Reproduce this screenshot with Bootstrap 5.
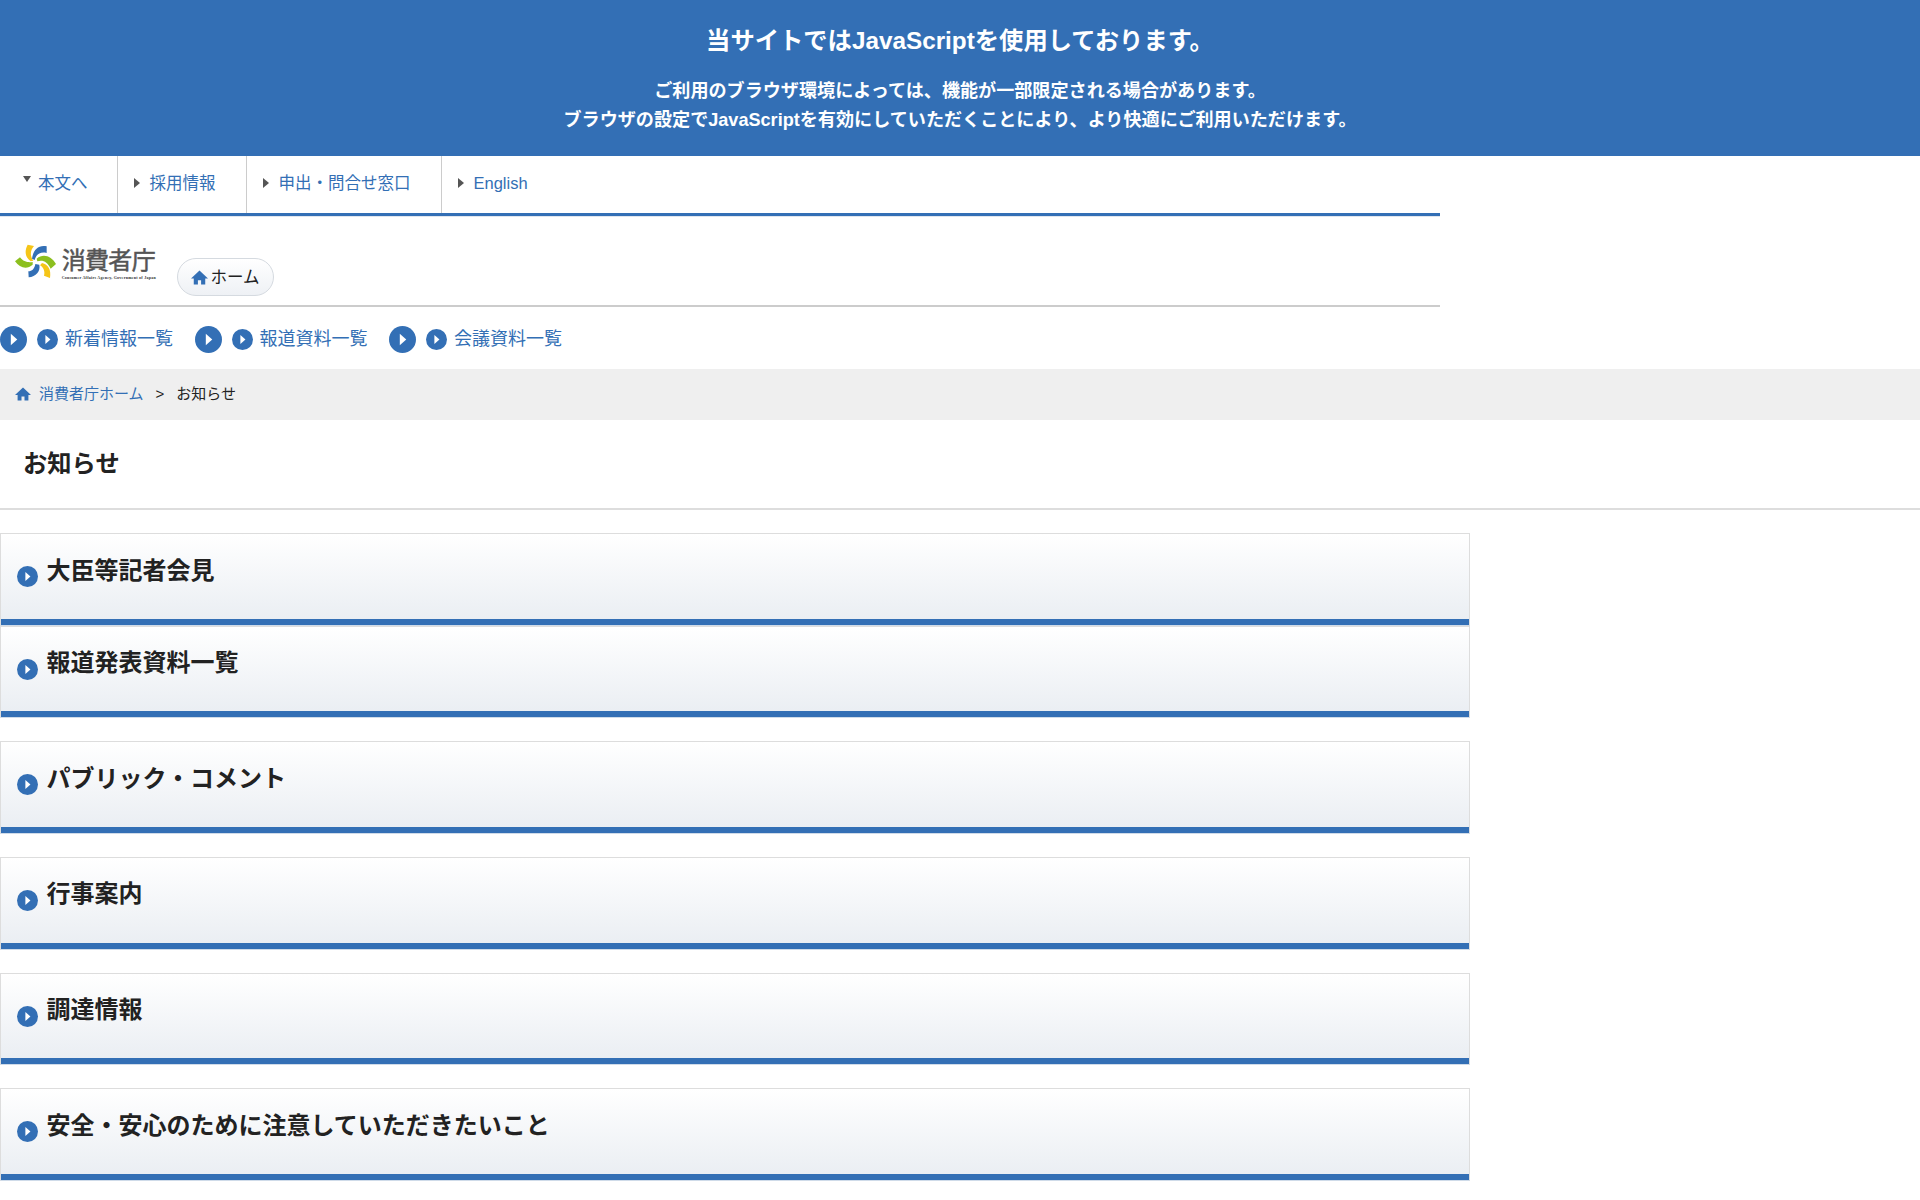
<!DOCTYPE html>
<html lang="ja"><head><meta charset="utf-8"><title>お知らせ</title>
<link href="https://cdn.jsdelivr.net/npm/bootstrap@5.3.0/dist/css/bootstrap.min.css" rel="stylesheet">
<style>
body{font-family:"Liberation Sans","Noto Sans CJK JP",sans-serif;color:#222;font-size:16px;height:1200px;overflow:hidden}
a{color:#336fb5;text-decoration:none}
.js-banner{background:#336fb5;color:#fff;height:156px;text-align:center;font-weight:700;padding-top:24px}
.js-banner .ttl{font-size:24.3px;line-height:34px;margin-bottom:19px}
.js-banner .txt{font-size:18.1px;line-height:29px;margin:0}
.util-nav{width:1440px;height:60px;border-bottom:3px solid #336fb5;box-shadow:0 1px 0 #e0e6ee}
.util-nav a{font-size:16.5px;display:flex;align-items:center;height:57px;border-right:1px solid #ccc;padding:0 30px 2px 16px;gap:10px}
.util-nav a.first-item{padding-left:23px;padding-right:29px;gap:7px}
.util-nav a.last-item{border-right:0}
.tri-r{width:0;height:0;border-left:6.5px solid #555;border-top:5px solid transparent;border-bottom:5px solid transparent;margin-top:-1px}
.tri-d{width:0;height:0;border-top:6px solid #555;border-left:4.5px solid transparent;border-right:4.5px solid transparent;margin-top:-10px}
.logo-row{width:1440px;height:91px;border-bottom:2px solid #ccc;padding-left:10px;align-items:flex-start}
.logo-svg{margin-top:22px;flex-shrink:0}
.home-pill{margin-top:42px;margin-left:17px;width:97px;height:38px;border:1px solid #d5dae0;border-radius:19px;background:linear-gradient(#fff,#eef1f5);color:#222;font-size:16.5px;gap:2px}
.quick-row{height:62px;padding-top:2px;gap:21.5px}
.quick-row a{font-size:18px}
.big-ic{margin-right:10px}
.small-ic{margin-right:7px}
.crumb-bar{background:#efefef;height:51px;padding-left:15px;font-size:15px;gap:8px}
.crumb-bar svg{margin-top:-2px}
.page-ttl{height:90px;border-bottom:2px solid #ddd;padding-left:23px;font-size:24.3px;font-weight:700;line-height:1;margin:0}
.sect-list{margin-top:23px}
.sect{width:1470px;height:92.67px;margin-bottom:23px;border:1px solid #ddd;border-bottom:1px solid #cfdbe9;background:linear-gradient(#fff,#e9edf2);position:relative}
.sect.tight{margin-bottom:0}
.sect h2{font-size:24px;font-weight:700;color:#222;margin:0;padding:19.5px 0 0 45.5px;line-height:34px}
.sect::after{content:"";position:absolute;left:0;right:0;bottom:0;height:6px;background:#336fb5}
.sect svg{position:absolute;left:15.5px;top:32px}
</style></head><body>
<svg width="0" height="0" class="position-absolute"><defs>
<symbol id="pl" viewBox="0 0 20 20"><circle cx="10" cy="10" r="10" fill="#336fb5"/><path d="M8 5.8L12.8 10L8 14.2z" fill="#fff"/></symbol>
<symbol id="hm" viewBox="0 0 16 16"><path d="M8 1.5L0 9h2.6v5.5h3.9v-4h3v4h3.9V9H16z" fill="#336fb5"/></symbol>
</defs></svg>
<div class="js-banner"><div class="ttl">当サイトではJavaScriptを使用しております。</div>
<p class="txt">ご利用のブラウザ環境によっては、機能が一部限定される場合があります。</p>
<p class="txt">ブラウザの設定でJavaScriptを有効にしていただくことにより、より快適にご利用いただけます。</p></div>
<nav class="util-nav d-flex">
<a href="#" class="first-item"><span class="tri-d"></span>本文へ</a>
<a href="#"><span class="tri-r"></span><span>採用情報</span></a>
<a href="#"><span class="tri-r"></span><span>申出・問合せ窓口</span></a>
<a href="#" class="last-item"><span class="tri-r"></span><span>English</span></a>
</nav>
<div class="logo-row d-flex">
<svg width="150" height="48" viewBox="0 0 450 144" class="logo-svg">
<path d="M53 20C45 35 42 55 62 70L70 68C58 52 62 35 72 24Z" fill="#f5c518"/>
<path d="M66 62C70 35 85 20 110 25L110 45C90 40 78 50 74 66Z" fill="#336fb5"/>
<path d="M80 62C100 45 125 55 138 78L122 92C112 72 100 65 82 70Z" fill="#8cbf1f"/>
<path d="M96 75C115 80 124 95 120 120L102 113C106 100 100 88 90 82Z" fill="#f5c518"/>
<path d="M88 80C92 100 78 116 56 118L55 100C66 100 74 92 76 78Z" fill="#336fb5"/>
<path d="M68 80C50 96 30 90 15 70L30 58C40 72 55 74 68 72Z" fill="#8cbf1f"/>
<text x="155" y="93" font-size="72" fill="#555" stroke="#555" stroke-width="1.5" textLength="282" font-family="Noto Sans CJK JP">消費者庁</text>
<text x="155" y="122" font-size="12" font-weight="700" fill="#333" textLength="282" font-family="Liberation Serif">Consumer Affairs Agency, Government of Japan</text>
</svg>
<a href="#" class="home-pill d-flex align-items-center justify-content-center"><svg width="17" height="17"><use href="#hm"/></svg>ホーム</a>
</div>
<div class="quick-row d-flex align-items-center">
<a href="#" class="d-flex align-items-center"><svg width="27" height="27" class="big-ic"><use href="#pl"/></svg><svg width="21" height="21" class="small-ic"><use href="#pl"/></svg>新着情報一覧</a>
<a href="#" class="d-flex align-items-center"><svg width="27" height="27" class="big-ic"><use href="#pl"/></svg><svg width="21" height="21" class="small-ic"><use href="#pl"/></svg>報道資料一覧</a>
<a href="#" class="d-flex align-items-center"><svg width="27" height="27" class="big-ic"><use href="#pl"/></svg><svg width="21" height="21" class="small-ic"><use href="#pl"/></svg>会議資料一覧</a>
</div>
<div class="crumb-bar d-flex align-items-center"><svg width="16" height="16"><use href="#hm"/></svg><a href="#">消費者庁ホーム</a><span class="mx-1">&gt;</span><span>お知らせ</span></div>
<h1 class="page-ttl d-flex align-items-center">お知らせ</h1>
<div class="sect-list">
<section class="sect tight"><svg width="21" height="21"><use href="#pl"/></svg><h2>大臣等記者会見</h2></section>
<section class="sect"><svg width="21" height="21"><use href="#pl"/></svg><h2>報道発表資料一覧</h2></section>
<section class="sect"><svg width="21" height="21"><use href="#pl"/></svg><h2>パブリック・コメント</h2></section>
<section class="sect"><svg width="21" height="21"><use href="#pl"/></svg><h2>行事案内</h2></section>
<section class="sect"><svg width="21" height="21"><use href="#pl"/></svg><h2>調達情報</h2></section>
<section class="sect"><svg width="21" height="21"><use href="#pl"/></svg><h2>安全・安心のために注意していただきたいこと</h2></section>
</div>
<script src="https://cdn.jsdelivr.net/npm/bootstrap@5.3.0/dist/js/bootstrap.bundle.min.js"></script>
</body></html>
